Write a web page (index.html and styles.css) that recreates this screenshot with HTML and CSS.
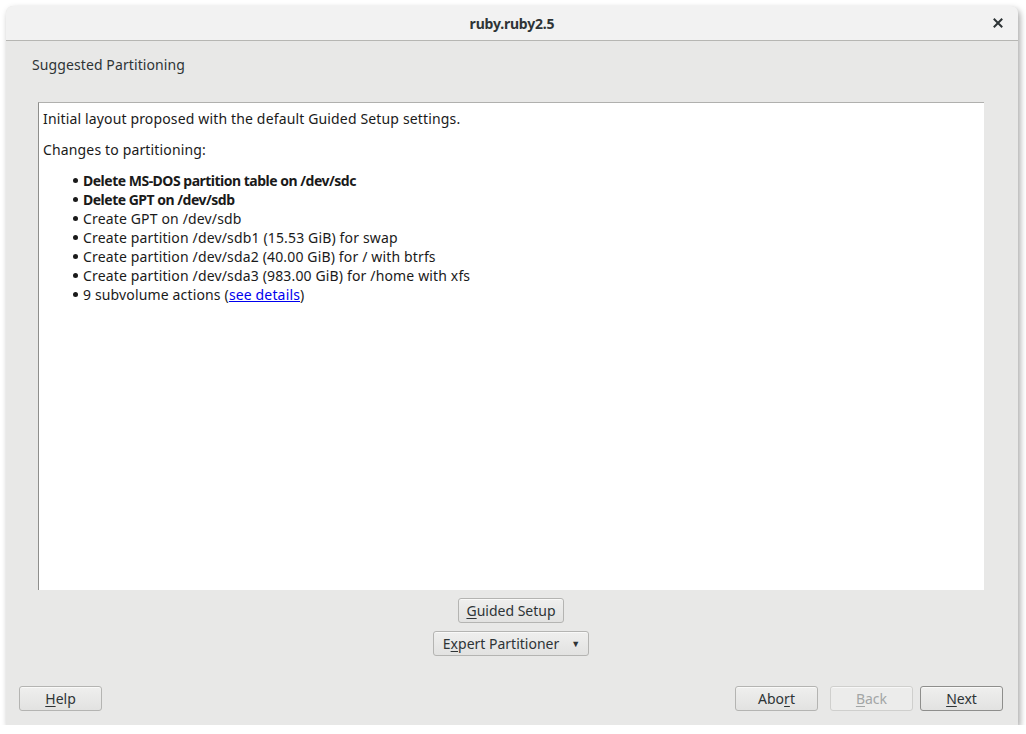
FILE: index.html
```html
<!DOCTYPE html>
<html lang="en">
<head>
  <meta charset="UTF-8">
  <title>ruby.ruby2.5</title>
  <link rel="stylesheet" href="styles.css">
</head>
<body>

  <div class="window">
    <div class="titlebar">
      <span class="title">ruby.ruby2.5</span>
      <span class="close">
        <svg width="10" height="10" viewBox="0 0 10 10"><path d="M1.5 1.5 L8.5 8.5 M8.5 1.5 L1.5 8.5" stroke="#2e3436" stroke-width="2" stroke-linecap="square"/></svg>
      </span>
    </div>

    <div class="content">
      <div class="heading">Suggested Partitioning</div>

      <div class="panel">
        <p>Initial layout proposed with the default Guided Setup settings.</p>
        <p>Changes to partitioning:</p>
        <ul class="changes">
          <li class="strong">Delete MS-DOS partition table on /dev/sdc</li>
          <li class="strong">Delete GPT on /dev/sdb</li>
          <li>Create GPT on /dev/sdb</li>
          <li>Create partition /dev/sdb1 (15.53 GiB) for swap</li>
          <li>Create partition /dev/sda2 (40.00 GiB) for / with btrfs</li>
          <li>Create partition /dev/sda3 (983.00 GiB) for /home with xfs</li>
          <li>9 subvolume actions (<a href="#">see details</a>)</li>
        </ul>
      </div>

      <div class="actions">
        <button class="btn guided"><u>G</u>uided Setup</button>
        <button class="btn expert">E<u>x</u>pert Partitioner <span class="arrow">&#9660;</span></button>
      </div>

      <div class="footer">
        <button class="btn wide"><u>H</u>elp</button>
        <div class="nav">
          <button class="btn wide">Abo<u>r</u>t</button>
          <button class="btn wide" disabled><u>B</u>ack</button>
          <button class="btn wide default"><u>N</u>ext</button>
        </div>
      </div>
    </div>
  </div>

</body>
</html>
```

FILE: styles.css
```css
body {
  margin: 0;
  background: #ffffff;
  font-family: "Noto Sans", sans-serif;
  font-size: 14px;
  color: #2e3436;
}

.window {
  margin: 6px 0 0 6px;
  width: 1012px;
  height: 719px;
  background: #e8e8e7;
  border-radius: 7px 7px 0 0;
  box-shadow: 2px 3px 6px rgba(0, 0, 0, 0.35);
  display: flex;
  flex-direction: column;
}

.titlebar {
  height: 34px;
  flex-shrink: 0;
  background: #f2f2f2;
  border-bottom: 1px solid #b6b6b3;
  border-radius: 7px 7px 0 0;
  display: flex;
  align-items: center;
  justify-content: center;
  position: relative;
}

.title {
  font-weight: bold;
  font-size: 14px;
  letter-spacing: -0.2px;
  color: #2e3436;
}

.close {
  position: absolute;
  right: 15px;
  top: 12px;
  width: 10px;
  height: 10px;
  display: flex;
}

.content {
  flex: 1;
  display: flex;
  flex-direction: column;
  padding: 0 34px 0 26px;
}

.heading {
  margin-top: 14px;
  line-height: 19px;
  letter-spacing: 0.1px;
  color: #2e3436;
}

.panel {
  margin: 28px 0 0 6px;
  height: 481px;
  flex-shrink: 0;
  background: #ffffff;
  border-left: 1px solid #8e8e8c;
  border-top: 1px solid #b0b0ae;
  padding: 6px 4px 0 4px;
  line-height: 19px;
  letter-spacing: 0.15px;
  color: #1a1a1a;
}

.panel p {
  margin: 0 0 12px 0;
}

.changes {
  list-style: none;
  margin: 1px 0 0 0;
  padding: 0 0 0 29px;
}

.changes li {
  position: relative;
  padding-left: 11px;
}

.changes li::before {
  content: "";
  position: absolute;
  left: 1px;
  top: 7px;
  width: 5px;
  height: 5px;
  border-radius: 50%;
  background: #1a1a1a;
}

.changes li.strong {
  font-weight: bold;
  letter-spacing: -0.5px;
}

.changes a {
  color: #0000ee;
}

.actions {
  display: flex;
  flex-direction: column;
  align-items: center;
  gap: 8px;
  margin-top: 8px;
  padding-left: 6px;
}

.btn {
  font-family: "Noto Sans", sans-serif;
  font-size: 14px;
  color: #2e3436;
  height: 25px;
  padding: 0 7px;
  background: linear-gradient(#efefee, #e2e2e1);
  border: 1px solid #b4b4b2;
  border-radius: 3px;
  box-shadow: 0 1px 0 rgba(255, 255, 255, 0.6) inset;
}

.btn u {
  text-underline-offset: 2px;
}

.btn.expert {
  padding: 0 8px 0 9px;
  display: flex;
  align-items: center;
}

.arrow {
  font-size: 9px;
  margin-left: 12px;
}

.btn:disabled {
  color: #a3a6a6;
  background: #ececeb;
  border-color: #cfcfcd;
}

.btn.wide {
  width: 83px;
}

.btn.default {
  border-color: #8e8e8c;
}

.footer {
  display: flex;
  justify-content: space-between;
  margin: 30px -19px 0 -13px;
}

.nav {
  display: flex;
  gap: 12px;
}

.nav .default {
  margin-left: -5px;
}
```
